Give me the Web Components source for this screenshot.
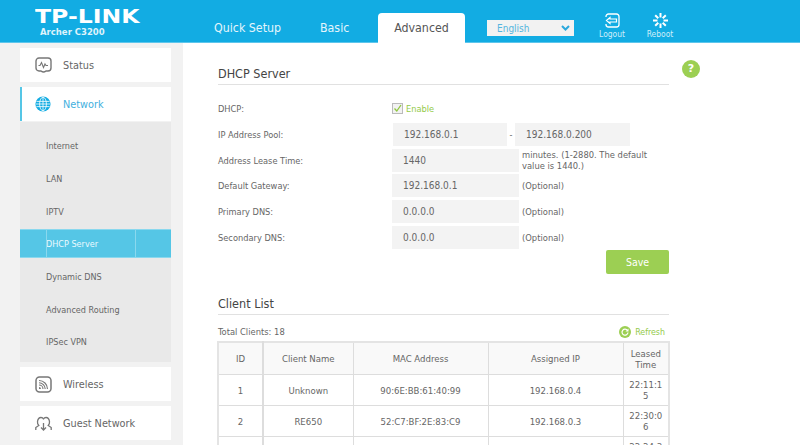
<!DOCTYPE html>
<html>
<head>
<meta charset="utf-8">
<style>
    html, body { margin: 0; height: 445px; overflow: hidden; background: #fff; }
    body { font-family: "DejaVu Sans Condensed", "DejaVu Sans", Verdana, sans-serif; font-size: 9.5px; color: #666; }
</style>
</head>
<body>
<tp-app>
    <tp-header slot="header"></tp-header>
    <tp-sidebar slot="side">
        <tp-nav-item icon="status">Status</tp-nav-item>
        <tp-nav-item icon="network" active>Network</tp-nav-item>
        <tp-subnav>
            <tp-sub-item>Internet</tp-sub-item>
            <tp-sub-item>LAN</tp-sub-item>
            <tp-sub-item>IPTV</tp-sub-item>
            <tp-sub-item selected>DHCP Server</tp-sub-item>
            <tp-sub-item>Dynamic DNS</tp-sub-item>
            <tp-sub-item>Advanced Routing</tp-sub-item>
            <tp-sub-item>IPSec VPN</tp-sub-item>
        </tp-subnav>
        <tp-nav-item icon="wireless">Wireless</tp-nav-item>
        <tp-nav-item icon="guest">Guest Network</tp-nav-item>
    </tp-sidebar>
    <tp-main slot="main">
        <tp-dhcp-form></tp-dhcp-form>
        <tp-client-list></tp-client-list>
    </tp-main>
</tp-app>

<script>
    (function () {
        'use strict';

        const ICONS = {
            status: '<path d="M6 14H4a3 3 0 0 1-3-3V4a3 3 0 0 1 3-3h9a3 3 0 0 1 3 3v7a3 3 0 0 1-3 3h-2q-2.5 2-5 0z" fill="none" stroke="#777" stroke-width="1.4"/><path d="M3.5 8.5h1.500l1.500-3 2 5 1.500-3.500 1 1.500h2" fill="none" stroke="#777" stroke-width="1.1"/>',
            network: '<circle cx="8" cy="8" r="7.6" fill="#12ace3"/><g fill="none" stroke="#fff" stroke-width=".8"><ellipse cx="8" cy="8" rx="3.4" ry="6.8"/><path d="M8 1v14M1.4 5.4h13.2M1.4 10.6h13.2M.8 8h14.4"/></g>',
            wireless: '<rect x="1" y="1" width="15" height="15" rx="3.5" fill="none" stroke="#777" stroke-width="1.5"/><g fill="none" stroke="#777" stroke-width="1.1"><path d="M4 4.5a8.5 8.5 0 0 1 8.5 8.5"/><path d="M4 6.8a6.2 6.2 0 0 1 6.2 6.2"/><path d="M4 9a4 4 0 0 1 4 4"/></g><path d="M4 11a2 2 0 0 1 2 2H4z" fill="#777"/>',
            guest: '<g fill="none" stroke="#777" stroke-width="1.3"><path d="M.8 15v-2.500l3-2c-1-1-1.500-2.200-1.300-3.800C2.800 4 4.300 2.500 6 2.500c1.300 0 2.200.8 2.700 1.700"/><path d="M16.200 15v-2.500l-3-2c1-1 1.500-2.200 1.300-3.800C14.200 4 12.700 2.500 11 2.500c-1.300 0-2.200.8-2.700 1.700"/><path d="M8.500 8v7M6 12.500l2.500 2.500 2.500-2.500"/></g>'
        };

        customElements.define('tp-app', class extends HTMLElement {
            constructor() {
                super();
                this.attachShadow({mode: 'open'}).innerHTML = `
                <style>
                    :host { display: grid; grid-template: 43px 402px / 183px 617px; width: 800px; height: 445px; overflow: hidden; }
                    .top { grid-column: 1 / 3; }
                </style>
                <div class="top"><slot name="header"></slot></div>
                <slot name="side"></slot>
                <slot name="main"></slot>`;
            }
        });

        customElements.define('tp-header', class extends HTMLElement {
            constructor() {
                super();
                this.attachShadow({mode: 'open'}).innerHTML = `
                <style>
                    :host { display: flex; height: 42px; background: #12ace3; border-bottom: 1px solid #5ec6ec; color: #fff; }
                    .logo { width: 183px; box-sizing: border-box; padding: 7px 0 0 35px; }
                    .brand { display: block; font: bold 19px/19px "DejaVu Sans", sans-serif; transform: scaleX(1.24); transform-origin: 0 0; white-space: nowrap; }
                    .model { display: block; font: bold 8.5px/11px "DejaVu Sans", sans-serif; margin: 1px 0 0 5px; color: #dff3fb; }
                    nav { display: flex; align-items: flex-end; margin-left: 13px; width: 269px; height: 42px; font-size: 12.3px; }
                    nav span { display: block; height: 29px; line-height: 30px; color: #e4f5fc; }
                    nav .quick { margin-left: 18px; width: 106px; }
                    nav .basic { width: 58px; }
                    nav .adv { width: 87px; background: #fff; color: #555; text-align: center; border-radius: 4px 4px 0 0; margin-bottom: -1px; height: 30px; line-height: 31px; }
                    .lang { display: flex; justify-content: space-between; align-items: center; box-sizing: border-box; margin: 20px 0 0 22px; width: 87px; height: 16px; padding: 0 4px 0 10px; background: #f2f2f2; color: #55b5de; font-size: 10px; }
                    .act { display: flex; flex-direction: column; align-items: center; margin-top: 13px; width: 48px; font-size: 8.4px; color: #cfeefa; gap: 1px; }
                    .act svg { display: block; }
                </style>
                <div class="logo"><span class="brand">TP-LINK</span><span class="model">Archer C3200</span></div>
                <nav><span class="quick">Quick Setup</span><span class="basic">Basic</span><span class="adv">Advanced</span></nav>
                <div class="lang"><span>English</span><svg width="9" height="6" viewBox="0 0 9 6"><path d="M1 1l3.5 3.5 3.5-3.5" fill="none" stroke="#2ba8dc" stroke-width="2"/></svg></div>
                <div class="act" style="margin-left:14px">
                    <svg width="15" height="15" viewBox="0 0 15 15"><path d="M1 4V3.500A2.500 2.500 0 0 1 3.500 1h8A2.500 2.500 0 0 1 14 3.500v8a2.500 2.500 0 0 1-2.500 2.500h-8A2.500 2.500 0 0 1 1 11.500V11" fill="none" stroke="#fff" stroke-width="1.3"/><path d="M1.500 7.500l3.500-3v1.500h6.500v3H5v1.500z" fill="none" stroke="#fff" stroke-width="1.2"/></svg>
                    <span>Logout</span>
                </div>
                <div class="act">
                    <svg width="15" height="15" viewBox="0 0 15 15"><g stroke="#fff" stroke-width="2"><path d="M7.500 0v4.500M7.500 10.500V15M0 7.500h4.500M10.500 7.500H15M2.200 2.200l3.100 3.100M9.700 9.700l3.100 3.100M12.800 2.200L9.700 5.300M5.300 9.700l-3.100 3.100"/></g></svg>
                    <span>Reboot</span>
                </div>`;
            }
        });

        customElements.define('tp-sidebar', class extends HTMLElement {
            constructor() {
                super();
                this.attachShadow({mode: 'open'}).innerHTML = `
                <style>
                    :host { display: flex; flex-direction: column; gap: 5px; box-sizing: border-box; padding: 5px 12px 0 20px; height: 402px; background: #f2f2f2; }
                </style>
                <slot></slot>`;
            }
        });

        customElements.define('tp-nav-item', class extends HTMLElement {
            constructor() {
                super();
                const active = this.hasAttribute('active');
                const icon = ICONS[this.getAttribute('icon')] || '';
                this.attachShadow({mode: 'open'}).innerHTML = `
                <style>
                    :host { display: flex; align-items: center; box-sizing: border-box; height: 34px; flex: none; background: #fff; font-size: 10.8px; color: ${active ? '#3fb0de' : '#666'}; }
                    :host([active]) { border-left: 2px solid #55c6e6; }
                    svg { flex: none; width: 16px; height: 16px; margin-left: ${active ? 13 : 15}px; margin-right: 12px; overflow: visible; }
                </style>
                <svg viewBox="0 0 16 16">${icon}</svg><slot></slot>`;
            }
        });

        customElements.define('tp-subnav', class extends HTMLElement {
            constructor() {
                super();
                this.attachShadow({mode: 'open'}).innerHTML = `
                <style>
                    :host { display: block; box-sizing: border-box; height: 240px; flex: none; margin-top: -4px; padding-top: 8px; background: #e9e9e9; }
                </style>
                <slot></slot>`;
            }
        });

        customElements.define('tp-sub-item', class extends HTMLElement {
            constructor() {
                super();
                this.attachShadow({mode: 'open'}).innerHTML = `
                <style>
                    :host { display: flex; align-items: center; height: 32.7px; box-sizing: border-box; padding-left: 26px; font-size: 9px; color: #666; position: relative; }
                    :host([selected]) { background: #55c6e6; color: #eafaff; height: 29px; margin: 1px 0 2.7px; border-top: 1px solid #8ad8ee; border-bottom: 1px solid #8ad8ee; }
                    :host([selected])::before, :host([selected])::after { content: ''; position: absolute; top: 0; bottom: 0; width: 1px; background: #8ad8ee; }
                    :host([selected])::before { left: 26px; }
                    :host([selected])::after { left: 115px; }
                </style>
                <slot></slot>`;
            }
        });

        customElements.define('tp-main', class extends HTMLElement {
            constructor() {
                super();
                this.attachShadow({mode: 'open'}).innerHTML = `
                <style>
                    :host { display: block; box-sizing: border-box; padding: 23px 0 0 35px; width: 617px; height: 402px; overflow: hidden; }
                </style>
                <slot></slot>`;
            }
        });

        customElements.define('tp-section-title', class extends HTMLElement {
            constructor() {
                super();
                this.attachShadow({mode: 'open'}).innerHTML = `
                <style>
                    :host { display: block; height: 18px; line-height: 15px; border-bottom: 1px solid #e1e1e1; font-size: 12.5px; color: #444; }
                </style>
                <slot></slot>`;
            }
        });

        customElements.define('tp-field', class extends HTMLElement {
            constructor() {
                super();
                this.attachShadow({mode: 'open'}).innerHTML = `
                <style>
                    :host { display: grid; grid-template-columns: 174px 1fr; align-items: center; height: 25.7px; font-size: 9.2px; color: #666; }
                    .ctl { display: flex; align-items: center; gap: 3px; }
                </style>
                <span><slot name="label"></slot></span>
                <div class="ctl"><slot></slot></div>`;
            }
        });

        customElements.define('tp-input', class extends HTMLElement {
            constructor() {
                super();
                this.attachShadow({mode: 'open'}).innerHTML = `
                <style>
                    :host { display: block; flex: none; box-sizing: border-box; width: 127px; height: 23px; line-height: 23px; padding-left: 11px; background: #f3f3f3; color: #666; font-size: 10px; }
                    :host([short]) { width: 114px; }
                </style>
                <slot></slot>`;
            }
        });

        customElements.define('tp-dhcp-form', class extends HTMLElement {
            constructor() {
                super();
                this.attachShadow({mode: 'open'}).innerHTML = `
                <style>
                    :host { display: block; width: 451px; position: relative; }
                    .fields { margin-top: 11px; }
                    .en { display: flex; align-items: center; gap: 3px; color: #94ca4a; }
                    .note { font-size: 9.3px; line-height: 11.5px; color: #666; width: 145px; }
                    .sep { width: 8px; text-align: center; font-size: 9px; margin: 0 -3px; }
                    .pool { margin-left: 1px; }
                    .save { margin: 0 0 0 auto; width: 63px; height: 24px; line-height: 24px; border-radius: 2px; background: #9ccf53; color: #fff; text-align: center; font-size: 10.5px; }
                    .help { position: absolute; left: 464px; top: -6px; width: 18px; height: 18px; border-radius: 50%; background: #9ccf53; color: #fff; font: bold 11px/18px "DejaVu Sans", sans-serif; text-align: center; }
                </style>
                <tp-section-title>DHCP Server</tp-section-title>
                <span class="help">?</span>
                <div class="fields">
                    <tp-field><span slot="label">DHCP:</span>
                        <span class="en"><svg width="11" height="11" viewBox="0 0 11 11"><rect x=".5" y=".5" width="10" height="10" fill="#f2f2f2" stroke="#bbb"/><path d="M2.5 5.5l2.3 2.5 4.2-6" fill="none" stroke="#8fc63f" stroke-width="1.3"/></svg>Enable</span>
                    </tp-field>
                    <tp-field><span slot="label">IP Address Pool:</span>
                        <tp-input short class="pool">192.168.0.1</tp-input><span class="sep">-</span><tp-input short style="width:115px">192.168.0.200</tp-input>
                    </tp-field>
                    <tp-field><span slot="label">Address Lease Time:</span>
                        <tp-input>1440</tp-input><span class="note">minutes. (1-2880. The default value is 1440.)</span>
                    </tp-field>
                    <tp-field><span slot="label">Default Gateway:</span>
                        <tp-input>192.168.0.1</tp-input><span class="note">(Optional)</span>
                    </tp-field>
                    <tp-field><span slot="label">Primary DNS:</span>
                        <tp-input>0.0.0.0</tp-input><span class="note">(Optional)</span>
                    </tp-field>
                    <tp-field><span slot="label">Secondary DNS:</span>
                        <tp-input>0.0.0.0</tp-input><span class="note">(Optional)</span>
                    </tp-field>
                </div>
                <div class="save">Save</div>`;
            }
        });

        customElements.define('tp-client-list', class extends HTMLElement {
            constructor() {
                super();
                const rows = [
                    ['1', 'Unknown', '90:6E:BB:61:40:99', '192.168.0.4', '22:11:15'],
                    ['2', 'RE650', '52:C7:BF:2E:83:C9', '192.168.0.3', '22:30:06'],
                    ['', '', '', '', '22:24:36']
                ];
                const body = rows.map(r => '<tr>' + r.map(c => `<td>${c}</td>`).join('') + '</tr>').join('');
                this.attachShadow({mode: 'open'}).innerHTML = `
                <style>
                    :host { display: block; width: 451px; margin-top: 22px; }
                    .bar { display: flex; justify-content: space-between; align-items: center; height: 19px; margin-top: 7px; font-size: 9.3px; color: #666; }
                    .refresh { display: flex; align-items: center; gap: 4px; color: #94ca4a; margin-right: 4px; font-size: 8.8px; }
                    table { border-collapse: collapse; table-layout: fixed; width: 451px; margin: 0 0 0 -1px; font-size: 9.5px; color: #666; text-align: center; border: 2px solid #e4e4e4; }
                    th, td { border: 1px solid #ddd; padding: 0 4px; height: 30px; font-weight: normal; line-height: 11px; word-break: break-all; }
                    th { background: #f9f9f9; height: 31px; }
                    th:last-child { word-break: normal; }
                    th:first-child, td:first-child { border-right-width: 2px; }
                </style>
                <tp-section-title>Client List</tp-section-title>
                <div class="bar"><span>Total Clients: 18</span><span class="refresh"><svg width="12" height="12" viewBox="0 0 12 12"><circle cx="6" cy="6" r="6" fill="#9ccf53"/><path d="M8.5 4.5A3 3 0 1 0 9 6.5" fill="none" stroke="#fff" stroke-width="1.2"/><path d="M9.5 2.500v3h-3z" fill="#fff"/></svg>Refresh</span></div>
                <table>
                    <colgroup><col style="width:45px"><col style="width:90px"><col style="width:135px"><col style="width:135px"><col style="width:46px"></colgroup>
                    <tr><th>ID</th><th>Client Name</th><th>MAC Address</th><th>Assigned IP</th><th>Leased Time</th></tr>
                    ${body}
                </table>`;
            }
        });
    })();
</script>
</body>
</html>
